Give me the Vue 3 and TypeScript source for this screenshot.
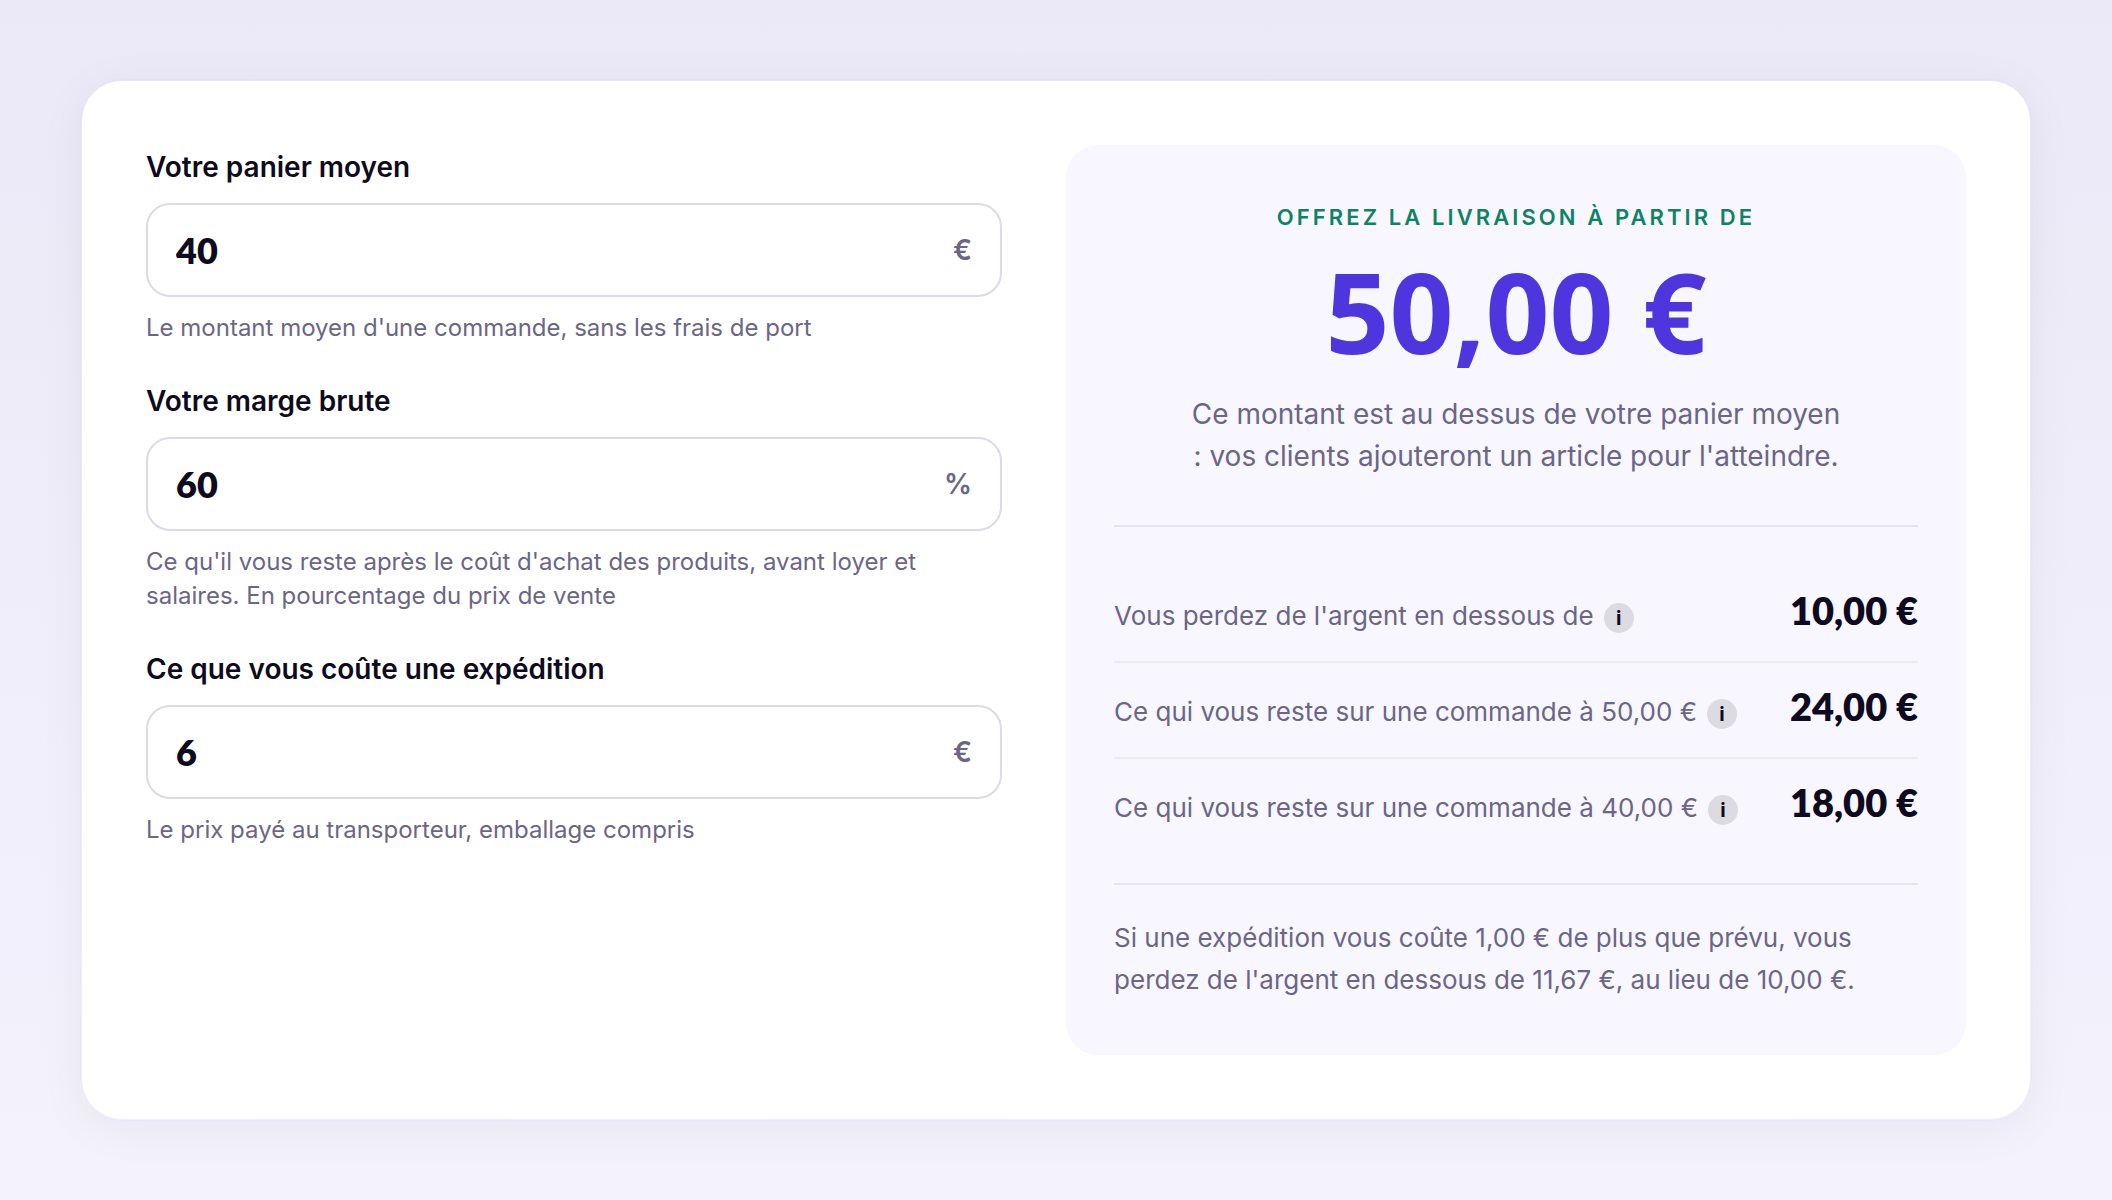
<script setup lang="ts">
import { computed, reactive } from 'vue'

interface Field {
  id: 'basket' | 'margin' | 'shipping'
  label: string
  unit: string
  hint: string
}

const fields: Field[] = [
  {
    id: 'basket',
    label: 'Votre panier moyen',
    unit: '€',
    hint: "Le montant moyen d'une commande, sans les frais de port",
  },
  {
    id: 'margin',
    label: 'Votre marge brute',
    unit: '%',
    hint: "Ce qu'il vous reste après le coût d'achat des produits, avant loyer et salaires. En pourcentage du prix de vente",
  },
  {
    id: 'shipping',
    label: 'Ce que vous coûte une expédition',
    unit: '€',
    hint: 'Le prix payé au transporteur, emballage compris',
  },
]

const values = reactive({ basket: '40', margin: '60', shipping: '6' })

const toNumber = (value: string) => Number(value.replace(',', '.')) || 0
const euros = (amount: number) => `${amount.toFixed(2).replace('.', ',')}\u00a0€`

const basket = computed(() => toNumber(values.basket))
const rate = computed(() => toNumber(values.margin) / 100 || 1)
const shipping = computed(() => toNumber(values.shipping))
const threshold = computed(() => basket.value * 1.25)
const breakEven = computed(() => shipping.value / rate.value)

const rows = computed(() => [
  { label: "Vous perdez de l'argent en dessous de", value: euros(breakEven.value) },
  {
    label: `Ce qui vous reste sur une commande à ${euros(threshold.value)}`,
    value: euros(threshold.value * rate.value - shipping.value),
  },
  {
    label: `Ce qui vous reste sur une commande à ${euros(basket.value)}`,
    value: euros(basket.value * rate.value - shipping.value),
  },
])
</script>

<template>
  <main class="page">
    <section class="card">
      <form class="fields" @submit.prevent>
        <div v-for="field in fields" :key="field.id" class="field">
          <label class="label" :for="field.id">{{ field.label }}</label>
          <div class="control">
            <input
              :id="field.id"
              v-model="values[field.id]"
              class="input"
              type="text"
              inputmode="decimal"
              :aria-describedby="`${field.id}-hint`"
            />
            <span class="unit">{{ field.unit }}</span>
          </div>
          <p :id="`${field.id}-hint`" class="hint">{{ field.hint }}</p>
        </div>
      </form>

      <div class="result">
        <div class="headline">
          <p class="eyebrow">Offrez la livraison à partir de</p>
          <p class="amount">{{ euros(threshold) }}</p>
          <p class="summary">
            Ce montant est au dessus de votre panier moyen : vos clients ajouteront un article pour l'atteindre.
          </p>
        </div>
        <dl class="rows">
          <div v-for="row in rows" :key="row.label" class="row">
            <dt class="term">
              {{ row.label }}<button class="info" type="button" aria-label="Plus d'informations">i</button>
            </dt>
            <dd class="value">{{ row.value }}</dd>
          </div>
        </dl>
        <p class="note">
          Si une expédition vous coûte {{ euros(1) }} de plus que prévu, vous perdez de l'argent en dessous de
          {{ euros((shipping + 1) / rate) }}, au lieu de {{ euros(breakEven) }}.
        </p>
      </div>
    </section>
  </main>
</template>

<style>
body {
  margin: 0;
}
</style>

<style scoped>
.page {
  box-sizing: border-box;
  min-height: 100vh;
  padding: 79px 80px;
  background: linear-gradient(180deg, #ebe9f7, #f4f2fd);
  color: #0e0b20;
  font-family: Inter, 'Liberation Sans', sans-serif;
}

p,
dl,
dd {
  margin: 0;
}

.card {
  display: grid;
  grid-template-columns: minmax(0, 39fr) minmax(0, 41fr);
  gap: 64px;
  padding: 64px;
  border: 2px solid rgba(14, 11, 32, 0.01);
  border-radius: 42px;
  background: #fff;
  background-clip: padding-box;
  box-shadow: 0 8px 48px rgba(14, 11, 32, 0.05);
}

.fields {
  display: flex;
  flex-direction: column;
  gap: 34px;
}

.field {
  display: flex;
  flex-direction: column;
  gap: 14px;
}

.label {
  font-size: 28px;
  font-weight: 600;
  line-height: 44px;
}

.control {
  display: flex;
  align-items: center;
  box-sizing: border-box;
  height: 94px;
  padding: 0 28px;
  border: 2px solid #dcdbe3;
  border-radius: 24px;
  background: #fff;
}

.control:focus-within {
  border-color: #4f35de;
}

.input {
  flex: 1;
  min-width: 0;
  padding: 0;
  border: 0;
  outline: 0;
  background: transparent;
  color: inherit;
  font-family: Lato, sans-serif;
  font-size: 36px;
  font-weight: 800;
  line-height: 46px;
}

.unit {
  color: #6b6685;
  font-size: 28px;
  font-weight: 600;
}

.hint {
  color: #6b6685;
  font-size: 24px;
  line-height: 34px;
}

.result {
  padding: 56px 48px 54px;
  border-radius: 32px;
  background: #f8f6ff;
}

.headline {
  display: flex;
  flex-direction: column;
  align-items: center;
  padding-bottom: 48px;
  border-bottom: 2px solid #e6e4f0;
  text-align: center;
}

.eyebrow {
  color: #0f8265;
  font-size: 22px;
  font-weight: 600;
  line-height: 32px;
  letter-spacing: 0.14em;
  text-transform: uppercase;
}

.amount {
  margin: 22px 0 26px;
  color: #4f35de;
  font-family: 'Open Sans', sans-serif;
  font-size: 112px;
  font-weight: 700;
  line-height: 112px;
}

.summary {
  max-width: 656px;
  color: #6b6685;
  font-size: 28px;
  line-height: 42px;
}

.rows {
  padding: 40px 0 30px;
  border-bottom: 2px solid #e6e4f0;
}

.row {
  display: flex;
  align-items: baseline;
  justify-content: space-between;
  gap: 32px;
  padding: 20px 0 24px;
}

.row + .row {
  border-top: 2px solid #ebe9f1;
}

.term {
  color: #6b6685;
  font-size: 26px;
  line-height: 42px;
}

.info {
  width: 30px;
  height: 30px;
  margin-left: 10px;
  padding: 0;
  border: 0;
  border-radius: 50%;
  background: #dcdbe1;
  color: #0e0b20;
  font-family: inherit;
  font-size: 20px;
  font-weight: 700;
  line-height: 30px;
  text-align: center;
}

.value {
  font-family: Lato, sans-serif;
  font-size: 38px;
  font-weight: 800;
  line-height: 46px;
  white-space: nowrap;
}

.note {
  padding-top: 32px;
  color: #6b6685;
  font-size: 26px;
  line-height: 42px;
}
</style>
